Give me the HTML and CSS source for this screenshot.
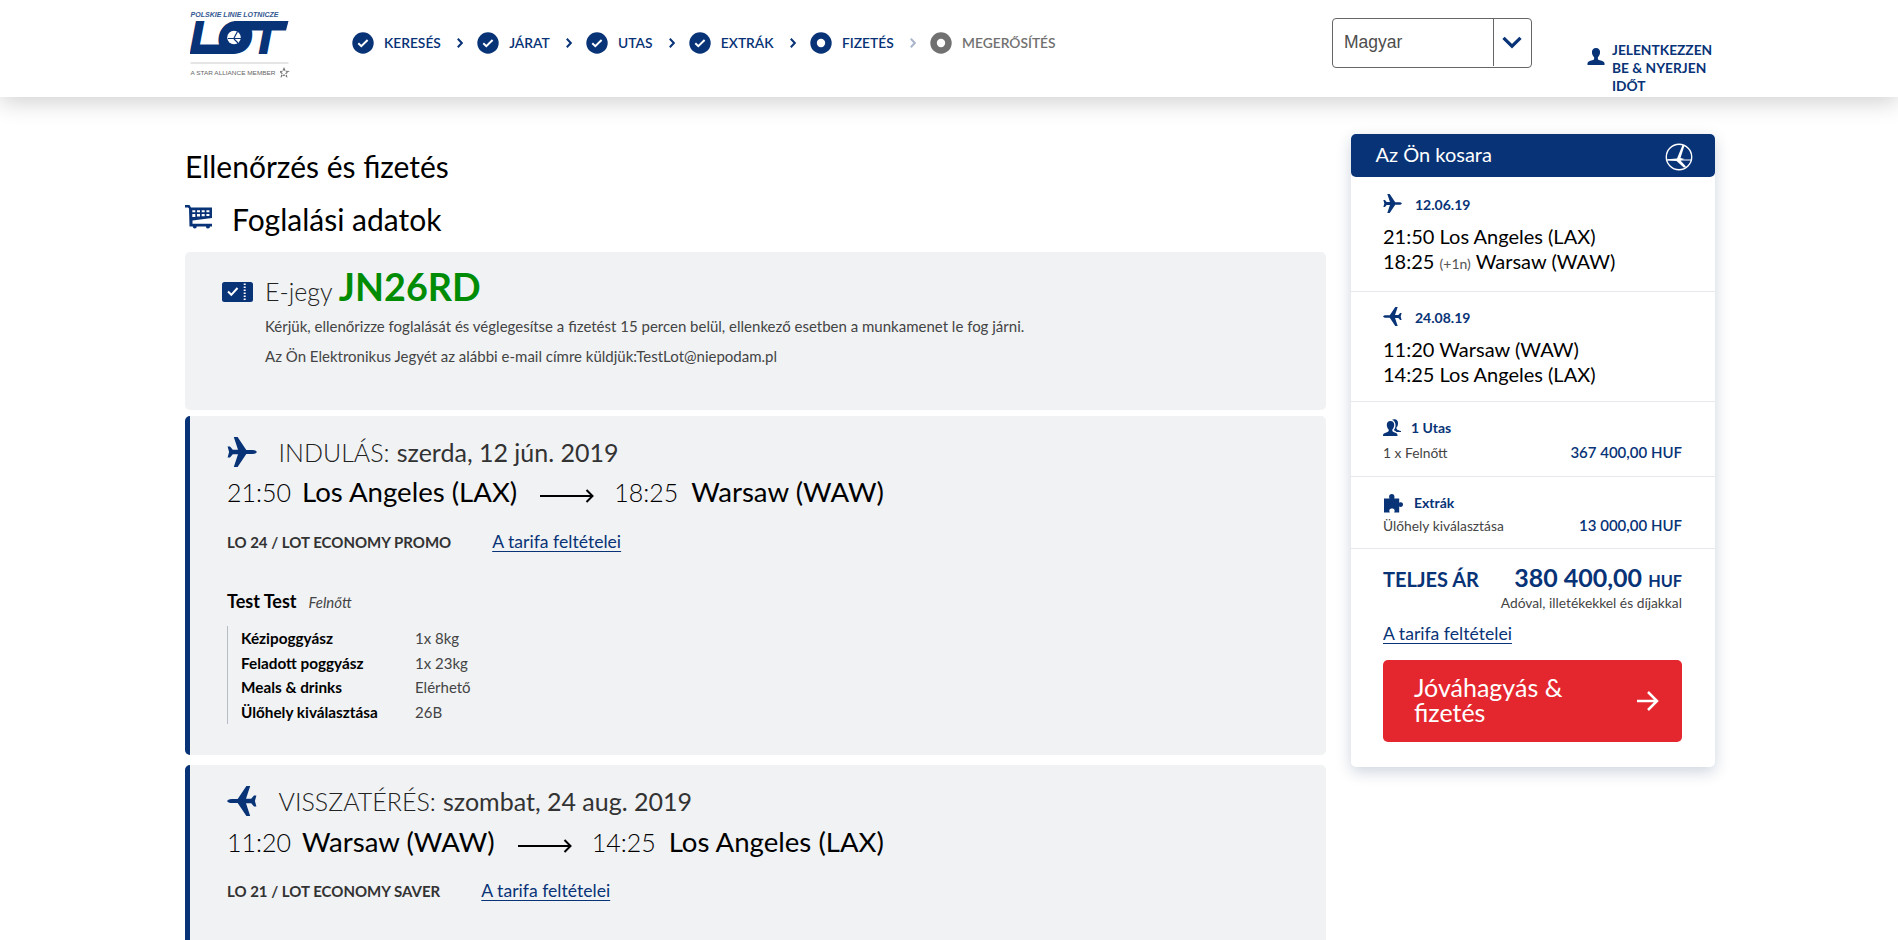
FILE: index.html
```html
<!DOCTYPE html>
<html lang="hu">
<head>
<meta charset="utf-8">
<title>Ellenőrzés és fizetés</title>
<link rel="stylesheet" href="styles.css">
</head>
<body>
<svg class="defs" width="0" height="0">
  <symbol id="plane" viewBox="0 0 30 30"><path d="M30 15c-1-1.400-2.500-2-4.500-2.100H19.300L10.600 0H6.800L11 12.800 5.800 12.700 3 9.500H.6L2.100 15 .6 20.500H3L5.800 17.300 11 17.200 6.800 30h3.800L19.300 17.100h6.200C27.500 17 29 16.400 30 15z"/></symbol>
  <symbol id="tick" viewBox="0 0 22 22"><circle cx="11" cy="11" r="10.700"/><path d="M6.300 11.300l3 2.900 6.300-6.200" fill="none" stroke="#fff" stroke-width="2"/></symbol>
  <symbol id="ring" viewBox="0 0 22 22"><circle cx="11" cy="11" r="10.700"/><circle cx="11" cy="11" r="4.200" fill="#fff"/></symbol>
  <symbol id="chev" viewBox="0 0 6 10"><path d="M.8.800L4.800 5 .8 9.200" fill="none" stroke="currentColor" stroke-width="2"/></symbol>
  <symbol id="longarrow" viewBox="0 0 54 14"><path d="M0 7h52.500M46.500 1l6 6-6 6" fill="none" stroke="currentColor" stroke-width="2"/></symbol>
  <symbol id="person" viewBox="0 0 18 18"><path d="M9 0c2.700 0 4.300 1.900 4.300 4.600 0 2.100-1 4.200-2.300 5.300v1.600c0 .8.700 1.200 2 1.500 3 .7 5 1.500 5 3.200V18H0v-1.800C0 14.500 2 13.700 5 13c1.300-.3 2-.7 2-1.500V9.900C5.700 8.800 4.700 6.700 4.700 4.600 4.700 1.900 6.300 0 9 0z"/></symbol>
</svg>

<header class="topbar">
  <div class="wrap topbar-in">
    <svg class="logo" width="106" height="70" viewBox="0 0 106 70">
      <text class="logo-top" x="0.500" y="8.500" textLength="88" lengthAdjust="spacingAndGlyphs">POLSKIE LINIE LOTNICZE</text>
      <text class="logo-main" x="0" y="45" textLength="89" lengthAdjust="spacingAndGlyphs">LOT</text>
      <path d="M44 13h54.500l-2.500 9.500H48zM2 36.500h30l12 9.500H.7z" fill="#083377"/>
      <ellipse cx="43.500" cy="29.500" rx="14" ry="14" fill="#083377"/>
      <circle cx="44" cy="29.500" r="6.800" fill="#fff"/>
      <path d="M38 30.500h13M44 30l3.500-6.500M44 31l4 4" stroke="#083377" stroke-width="1.200"/>
      <path d="M.5 55h98" stroke="#ccc"/>
      <text class="logo-sub" x="0.500" y="67" textLength="85" lengthAdjust="spacingAndGlyphs">A STAR ALLIANCE MEMBER</text>
      <path d="M94 60.500l1.200 2.700 3 .3-2.300 2 .7 3-2.600-1.500-2.600 1.500.7-3-2.300-2 3-.3z" fill="none" stroke="#777" stroke-width="1.200" stroke-dasharray="2.500 1"/>
    </svg>
    <nav class="steps">
      <span class="step"><svg class="dot"><use href="#tick"/></svg>KERESÉS<svg class="chev"><use href="#chev"/></svg></span>
      <span class="step"><svg class="dot"><use href="#tick"/></svg>JÁRAT<svg class="chev"><use href="#chev"/></svg></span>
      <span class="step"><svg class="dot"><use href="#tick"/></svg>UTAS<svg class="chev"><use href="#chev"/></svg></span>
      <span class="step"><svg class="dot"><use href="#tick"/></svg>EXTRÁK<svg class="chev"><use href="#chev"/></svg></span>
      <span class="step"><svg class="dot"><use href="#ring"/></svg>FIZETÉS<svg class="chev chev-dim"><use href="#chev"/></svg></span>
      <span class="step step-off"><svg class="dot"><use href="#ring"/></svg>MEGERŐSÍTÉS</span>
    </nav>
    <div class="lang"><span class="lang-name">Magyar</span><span class="lang-btn"><svg width="20" height="13" viewBox="0 0 20 13"><path d="M1.500 1.800L10 10.200l8.500-8.400" fill="none" stroke="#083377" stroke-width="3.200"/></svg></span></div>
    <a class="login"><svg class="login-ico"><use href="#person"/></svg><span>JELENTKEZZEN<br>BE &amp; NYERJEN<br>IDŐT</span></a>
  </div>
</header>

<div class="wrap page">
  <main class="main">
    <h1 class="title">Ellenőrzés és fizetés</h1>
    <h2 class="subtitle">
      <svg class="cart" width="28" height="26" viewBox="0 0 28 26"><path d="M0 0h4.500L6 2.500h21V13L7.500 15.500v3.300H27v2.700h-2a2 2 0 0 1-4 .2 2 2 0 0 1-.2-.2h-9a2 2 0 0 1-4 0H4.500L4 3.500 3 2.500H0z"/><path d="M7.300 5.300h3v2h-3zM12 5.300h3v2h-3zM16.700 5.300h3v2h-3zM21.400 5.300h3v2h-3zM7.300 9h3v3h-3zM12 9h3v2.600h-3zM16.700 9h3v2.300h-3zM21.400 9h3v2h-3z" fill="#fff"/></svg>
      Foglalási adatok
    </h2>

    <section class="card ticket">
      <svg class="ticket-ico" width="31" height="20" viewBox="0 0 31 20"><rect width="31" height="20" rx="2.500"/><path d="M6 9.500l3.300 3.300L15.500 6" fill="none" stroke="#fff" stroke-width="2"/><path d="M22.700 1.500V19" stroke="#fff" stroke-width="2" stroke-dasharray="1.500 1.500"/></svg>
      <div class="ticket-body">
        <div class="ticket-head">E-jegy <b>JN26RD</b></div>
        <p>Kérjük, ellenőrizze foglalását és véglegesítse a fizetést 15 percen belül, ellenkező esetben a munkamenet le fog járni.</p>
        <p>Az Ön Elektronikus Jegyét az alábbi e-mail címre küldjük:TestLot@niepodam.pl</p>
      </div>
    </section>

    <section class="card flight">
      <div class="when"><svg class="plane"><use href="#plane"/></svg><span class="when-label">INDULÁS:</span> <span>szerda, 12 jún. 2019</span></div>
      <div class="route"><span class="time">21:50</span><span class="city">Los Angeles (LAX)</span><svg class="long"><use href="#longarrow"/></svg><span class="time">18:25</span><span class="city city-to">Warsaw (WAW)</span></div>
      <div class="fare"><b>LO 24 / LOT ECONOMY PROMO</b><a class="link">A tarifa feltételei</a></div>
      <div class="pax"><b>Test Test</b><i>Felnőtt</i></div>
      <dl class="details">
        <dt>Kézipoggyász</dt><dd>1x 8kg</dd>
        <dt>Feladott poggyász</dt><dd>1x 23kg</dd>
        <dt>Meals &amp; drinks</dt><dd>Elérhető</dd>
        <dt>Ülőhely kiválasztása</dt><dd>26B</dd>
      </dl>
    </section>

    <section class="card flight flight-back">
      <div class="when"><svg class="plane flip"><use href="#plane"/></svg><span class="when-label">VISSZATÉRÉS:</span> <span>szombat, 24 aug. 2019</span></div>
      <div class="route"><span class="time">11:20</span><span class="city">Warsaw (WAW)</span><svg class="long"><use href="#longarrow"/></svg><span class="time">14:25</span><span class="city city-to">Los Angeles (LAX)</span></div>
      <div class="fare"><b>LO 21 / LOT ECONOMY SAVER</b><a class="link">A tarifa feltételei</a></div>
    </section>
  </main>

  <aside class="basket">
    <div class="basket-head">Az Ön kosara
      <svg width="28" height="28" viewBox="0 0 28 28"><circle cx="14" cy="14" r="12.700" fill="none" stroke="#fff" stroke-width="1.400"/><path d="M1.500 17h25" stroke="#fff"/><path d="M17.500 2l2 .5L15.500 15l4 1-4 1.500 5.500 6-2 1.300L11.500 18l-9-.7v-1L12 15.500z" fill="#fff"/></svg>
    </div>
    <div class="leg">
      <div class="leg-date"><svg class="plane-s"><use href="#plane"/></svg>12.06.19</div>
      <div class="leg-line">21:50 Los Angeles (LAX)</div>
      <div class="leg-line">18:25 <small>(+1n)</small> Warsaw (WAW)</div>
    </div>
    <div class="leg leg-back">
      <div class="leg-date"><svg class="plane-s flip"><use href="#plane"/></svg>24.08.19</div>
      <div class="leg-line">11:20 Warsaw (WAW)</div>
      <div class="leg-line">14:25 Los Angeles (LAX)</div>
    </div>
    <div class="item item-pax">
      <div class="item-head"><svg width="18" height="17" viewBox="0 0 18 17"><path d="M9 .8C10 .2 11 0 12 .2c2.200.4 3 2 3 4 0 2-.7 3.600-1.700 4.600.3 1.800 1 2.400 4.700 3.200v1h-4.500C12.500 12 11.400 11.600 10.800 11c1.200-1.400 1.800-3 1.700-5C12.400 3.500 11.300 1.600 9 .8z"/><path d="M7.500 2c2.300 0 3.700 1.600 3.700 4 0 1.800-.8 3.600-1.900 4.600v1c0 1.200 1.200 1.600 3 2.200 1.700.5 2.200 1 2.200 3.200H0c0-2.200.8-2.700 2.700-3.200 1.800-.6 3-1 3-2.200v-1C4.600 9.600 3.800 7.800 3.800 6c0-2.400 1.400-4 3.700-4z"/></svg>1 Utas</div>
      <div class="item-row"><span>1 x Felnőtt</span><b>367 400,00 HUF</b></div>
    </div>
    <div class="item item-extra">
      <div class="item-head"><svg width="19" height="19" viewBox="0 0 19 19"><path d="M0 4.500h5.500C4.500 2 5.500 0 7.800 0S11 2 10.200 4.500h5V8.700c1.800-1 3.800-.4 3.800 1.900s-2 2.900-3.800 2V18.500h-5c1-2.400.2-4-2.200-4s-3.300 1.600-2.200 4H0z"/></svg>Extrák</div>
      <div class="item-row"><span>Ülőhely kiválasztása</span><b>13 000,00 HUF</b></div>
    </div>
    <div class="total">
      <div class="total-row"><span>TELJES ÁR</span><span class="sum">380 400,00 <small>HUF</small></span></div>
      <div class="tax">Adóval, illetékekkel és díjakkal</div>
      <a class="link">A tarifa feltételei</a>
      <button class="pay"><span>Jóváhagyás &amp; fizetés</span><svg width="22" height="20" viewBox="0 0 22 20"><path d="M0 10h20M11 1l9 9-9 9" fill="none" stroke="#fff" stroke-width="2.500"/></svg></button>
    </div>
  </aside>
</div>
</body>
</html>
```
FILE: styles.css
```css
* { box-sizing: border-box; margin: 0; padding: 0; }
body { background: #fff; color: #000; font: 400 15px/20px Lato, sans-serif; }
svg { display: block; flex: none; fill: #083377; }
.defs { position: absolute; }
.flip { transform: scaleX(-1); }
.wrap { width: 1530px; margin-left: 185px; }

.topbar { height: 97px; background: #fff; box-shadow: 0 5px 22px rgba(0, 0, 0, .19); }
.topbar-in { display: flex; align-items: flex-start; height: 97px; }
.logo { margin: 8px 0 0 5px; }
.logo-top { font: italic bold 6.500px "Liberation Sans", sans-serif; fill: #345891; }
.logo-main { font: italic bold 44px "Liberation Sans", sans-serif; stroke: #083377; stroke-width: 2px; }
.logo-sub { font: 6.200px "Liberation Sans", sans-serif; fill: #666; }

.steps { display: flex; flex: none; width: 1036px; padding: 32px 0 0 56px; }
.step { display: flex; align-items: center; height: 22px; font-weight: 600; font-size: 13.800px; color: #083377; }
.dot { width: 22px; height: 22px; margin-right: 9.900px; }
.chev { width: 6px; height: 10px; margin: 0 13.900px 0 16.500px; }
.chev-dim { color: #a9b5cc; }
.step-off { color: #717171; }
.step-off .dot { fill: #717171; }
.lang { display: flex; flex: none; width: 200px; height: 50px; margin-top: 18px; border: 1px solid #666; border-radius: 4px; }
.lang-name { flex: 1; padding-left: 11px; font: 17.500px/47px "Liberation Sans", sans-serif; color: #4d4d4d; }
.lang-btn { display: flex; align-items: center; justify-content: center; width: 38px; height: 47px; padding-right: 1px; border-left: 1px solid #666; }
.login { display: flex; flex: none; margin: 41px 0 0 55px; font-weight: 700; font-size: 13.750px; line-height: 18px; color: #083377; }
.login-ico { width: 18px; height: 17px; margin: 7px 7px 0 0; }

.page { display: flex; justify-content: space-between; align-items: flex-start; }
.main { width: 1141px; padding-top: 51px; }
.title, .subtitle { font-size: 30px; font-weight: 400; line-height: 36px; }
.subtitle { display: flex; margin: 17px 0 15px; }
.cart { margin: 4px 19px 0 0; }
.card { background: #f0f2f4; border-radius: 5px; }
.ticket { display: flex; height: 158px; padding: 15px 0 0 37px; }
.ticket-ico { margin: 15px 12px 0 0; }
.ticket-head { height: 40px; margin-bottom: 9px; font-size: 25px; font-weight: 300; line-height: 40px; color: #222; }
.ticket-head b { font-size: 37.700px; font-weight: 700; color: #008c05; }
.ticket p { margin-bottom: 10px; color: #444; }

.flight { height: 339px; margin-top: 6px; padding: 21px 0 0 37px; border-left: 5px solid #083377; }
.flight-back { height: 175px; margin-top: 10px; border-radius: 5px 5px 0 0; }
.when { display: flex; height: 30px; font-size: 25px; line-height: 30px; color: #333; }
.when-label { margin-right: 7.200px; font-weight: 300; color: #222; }
.plane { width: 30px; height: 30px; margin-right: 21.600px; }
.route { display: flex; align-items: baseline; height: 34px; margin-top: 8px; line-height: 34px; }
.time { font-size: 25px; font-weight: 300; }
.city { margin-left: 11px; font-size: 27.600px; }
.city-to { margin-left: 13px; }
.long { align-self: center; width: 54px; height: 14px; margin: 7px 20px 0 23px; }
.fare { display: flex; align-items: baseline; height: 24px; margin-top: 21px; line-height: 24px; }
.fare b { margin-right: 41px; color: #333; }
.flight-back .route { margin-top: 9px; }
.flight-back .fare { margin-top: 20px; }
.link { font-size: 17.600px; color: #083377; text-decoration: underline; text-decoration-thickness: 1px; text-underline-offset: 3px; }
.pax { display: flex; align-items: baseline; height: 22px; margin-top: 36px; line-height: 22px; }
.pax b { font-size: 18px; }
.pax i { margin-left: 12px; font-size: 15px; color: #444; }
.details { display: grid; grid-template-columns: 174px auto; grid-auto-rows: 24.500px; height: 98px; margin-top: 14px; padding-left: 13px; border-left: 1px solid #b5bcc6; line-height: 24.500px; }
.details dt { font-size: 15.300px; font-weight: 700; }
.details dd { color: #444; }

.basket { width: 364px; height: 633px; margin-top: 37px; background: #fff; border-radius: 5px; box-shadow: 0 5px 15px rgba(10, 40, 90, .2); }
.basket-head { display: flex; justify-content: space-between; height: 43px; padding: 8px 22px 0 24.500px; background: #083377; border-radius: 5px; color: #fff; font-size: 20px; line-height: 24px; }
.basket-head svg { margin-top: 1px; }
.leg { height: 115px; padding: 18px 32px 0; border-bottom: 1px solid #e6e8ec; font-size: 20px; }
.leg-back { height: 110px; padding-top: 16px; }
.leg-date { display: flex; align-items: center; height: 20px; margin-bottom: 9px; font-size: 14px; font-weight: 700; color: #083377; }
.plane-s { width: 19px; height: 19px; margin: -3px 13px 1px 0; }
.leg-line { height: 25px; line-height: 25px; }
.leg small { font-size: 14px; color: #555; }
.item { height: 75px; padding: 16px 33px 0 32px; border-bottom: 1px solid #e6e8ec; }
.item-head { display: flex; height: 20px; font-size: 14px; font-weight: 700; color: #083377; }
.item-head svg { margin: 1px 10px 0 0; }
.item-row { display: flex; justify-content: space-between; align-items: baseline; height: 20px; margin-top: 4px; font-size: 13.800px; color: #444; }
.item-row b { font-size: 15px; font-weight: 600; color: #083377; }
.item-extra { height: 72px; }
.item-extra .item-head svg { margin: 1px 11px 0 1px; }
.item-extra .item-row { margin-top: 2px; }
.total { padding: 13px 33px 0 32px; }
.total-row { display: flex; justify-content: space-between; align-items: baseline; height: 30px; font-size: 20px; font-weight: 700; line-height: 30px; color: #083377; }
.sum { font-size: 25px; }
.sum small { font-size: 16.300px; }
.tax { height: 20px; margin: 1px 0 9px; font-size: 13.800px; text-align: right; color: #444; }
.total .link { display: block; height: 24px; line-height: 24px; }
.pay { display: flex; justify-content: space-between; align-items: center; width: 299px; height: 82px; margin-top: 14px; padding: 0 23px 0 31px; border: 0; border-radius: 5px; background: #e4272f; color: #fff; font: 400 25px/25px Lato, sans-serif; text-align: left; }
.pay span { width: 180px; margin-top: -3px; }
```
